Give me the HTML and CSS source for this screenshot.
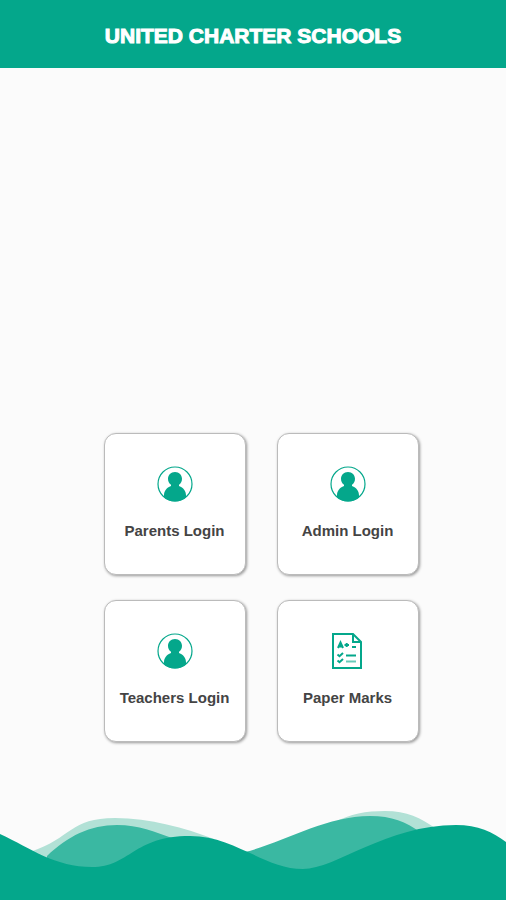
FILE: index.html
```html
<!DOCTYPE html>
<html lang="en">
<head>
    <meta charset="UTF-8">
    <meta name="viewport" content="width=device-width, initial-scale=1.0">
    <title>United Charter Schools</title>
    <link rel="stylesheet" href="styles.css">
</head>
<body>
    <header class="header">
        <h1>UNITED CHARTER SCHOOLS</h1>
    </header>

    <!-- shared user icon -->
    <svg class="sprite" aria-hidden="true">
        <symbol id="user" viewBox="0 0 36 36">
            <circle cx="18" cy="18" r="17" fill="none" stroke="currentColor" stroke-width="1.2"/>
            <path fill="currentColor" d="M18 6C22.200 6 25 9 25 12.800C25 15.500 23.800 17.600 22 18.800V20C26.500 21.500 29 25 29 29.500V31.200A17 17 0 0 1 18 35.500A17 17 0 0 1 7 31.200V29.500C7 25 9.500 21.500 14 20V18.800C12.200 17.600 11 15.500 11 12.800C11 9 13.800 6 18 6z"/>
        </symbol>
    </svg>

    <main class="menu">
        <a class="card" href="#parents">
            <svg class="icon" aria-hidden="true"><use href="#user"/></svg>
            <span>Parents Login</span>
        </a>
        <a class="card" href="#admin">
            <svg class="icon" aria-hidden="true"><use href="#user"/></svg>
            <span>Admin Login</span>
        </a>
        <a class="card" href="#teachers">
            <svg class="icon" aria-hidden="true"><use href="#user"/></svg>
            <span>Teachers Login</span>
        </a>
        <a class="card" href="#marks">
            <svg class="icon" viewBox="0 0 36 36" fill="none" stroke="currentColor" stroke-width="2" aria-hidden="true">
                <path d="M3 1H23L31 9V35H3z"/>
                <path d="M23 1V9H31" />
                <path d="M8 15L10.500 9.500L13 15M9 13.500H12.500M14.500 12H19M16.700 10V14M22 14H26"/>
                <path d="M7.500 21.500L9.500 23.200L13 20M7.500 27.500L9.500 29.200L13 26M16 22.500H26"/>
                <path d="M16 28.500H26" opacity=".6"/>
            </svg>
            <span>Paper Marks</span>
        </a>
    </main>

    <footer class="footer">
        <svg class="waves" viewBox="0 0 506 100" preserveAspectRatio="none" aria-hidden="true">
            <path class="wave-light" d="M30 52C72 38 70 18 115 18C150 18 185 28 214 39V70H30zM335 22C350 14 366 11 385 11C407 11 421 18 435 28V60H335z"/>
            <path class="wave-mid" d="M47 56C68 36 90 25 117 25C139 25 155 32 172 38V80H47zM245 52C285 42 325 16 370 16C392 16 406 22 420 32V80H245z"/>
            <path class="wave-front" d="M0 34C32 49 55 67 92 67C130 67 133 36 190 36C235 36 264 69 303 69C336 69 386 25 456 25C478 25 493 32 506 42V100H0z"/>
        </svg>
    </footer>
</body>
</html>
```

FILE: styles.css
```css
* {
    box-sizing: border-box;
}

body {
    display: flex;
    flex-direction: column;
    min-height: 100vh;
    margin: 0;
    background-color: #fbfbfb;
    color: #444;
    font-family: "Liberation Sans", Arial, sans-serif;
}

.header {
    padding: 24px 16px 20px;
    background-color: #04a78b;
    color: #fff;
    text-align: center;
}

h1 {
    margin: 0;
    font-size: 21px;
    line-height: 24px;
    -webkit-text-stroke: 1px #fff;
}

.sprite {
    position: absolute;
    width: 0;
    height: 0;
}

.menu {
    display: grid;
    grid-template-columns: repeat(2, 142px);
    gap: 25px 31px;
    justify-content: center;
    margin-top: auto;
    padding: 0 0 58px 16px;
}

.card {
    display: flex;
    flex-direction: column;
    align-items: center;
    gap: 19px;
    height: 142px;
    padding-top: 32px;
    border: 1px solid #bbb;
    border-radius: 12px;
    background-color: #fff;
    box-shadow: 1px 1px 3px rgba(0, 0, 0, 0.4);
    color: inherit;
    font-size: 15px;
    font-weight: bold;
    line-height: 20px;
    text-decoration: none;
    white-space: nowrap;
}

.icon {
    width: 36px;
    height: 36px;
    color: #04a78b;
}

.waves {
    display: block;
    width: 100%;
    height: 100px;
}

.wave-light {
    fill: #b2e1d6;
}

.wave-mid {
    fill: #3ab8a2;
}

.wave-front {
    fill: #04a78b;
}
```
